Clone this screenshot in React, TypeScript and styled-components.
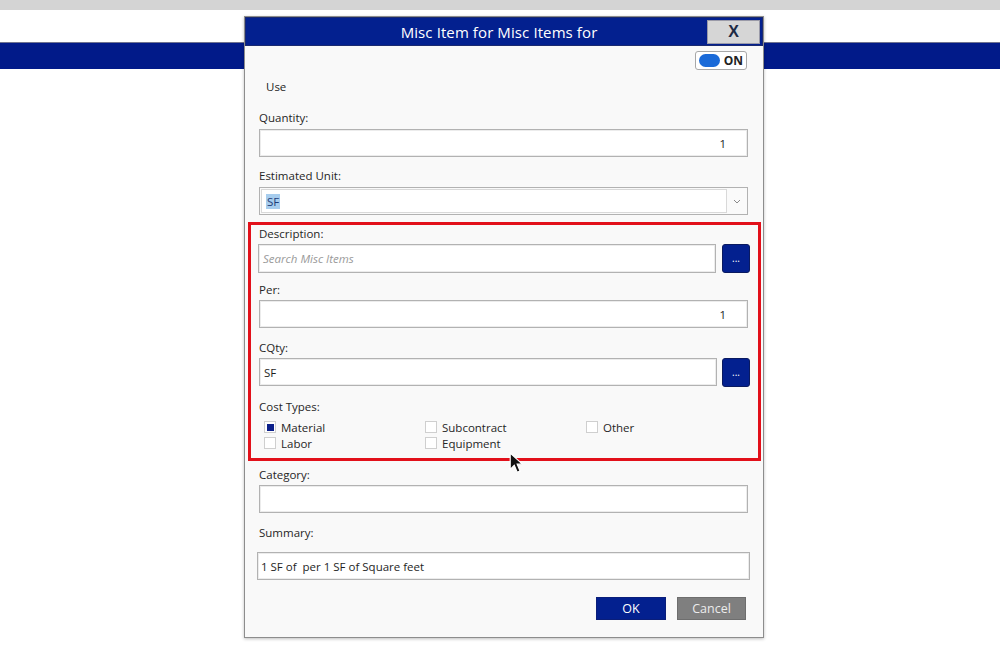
import React from "react";
import styled, { createGlobalStyle } from "styled-components";

const GlobalStyle = createGlobalStyle`
  html, body {
    margin: 0;
    padding: 0;
    background: #ffffff;
    font-family: "Open Sans", "Noto Sans", sans-serif;
    color: #1e1e1e;
  }
  * { box-sizing: border-box; }
`;

const Page = styled.div`
  position: relative;
  width: 1000px;
  height: 645px;
  overflow: hidden;
  background: #fff;
`;

const TopStrip = styled.div`
  height: 10px;
  background: #d4d4d4;
`;

const Band = styled.div`
  margin-top: 32px;
  height: 27px;
  background: #011a89;
  border-top: 1px solid #6f7390;
`;

const Dialog = styled.div`
  position: absolute;
  left: 244px;
  top: 16px;
  width: 520px;
  height: 622px;
  background: #f9f9f9;
  border: 1px solid #8d8d8d;
  box-shadow: 0 1px 3px rgba(0, 0, 0, 0.25);
  display: flex;
  flex-direction: column;
`;

const TitleBar = styled.div`
  height: 29px;
  background: #03208f;
  display: flex;
  align-items: center;
  justify-content: center;
  position: relative;
  border: 1px solid #1b2a70;
  padding-right: 10px;
`;

const Title = styled.div`
  color: #fff;
  font-size: 15px;
  letter-spacing: 0.1px;
`;

const CloseButton = styled.button`
  position: absolute;
  right: 2px;
  top: 2px;
  width: 53px;
  height: 24px;
  background: #d6d6d6;
  border: 1px solid #9a9aa8;
  font-family: "Liberation Sans", Arial, sans-serif;
  font-weight: bold;
  font-size: 16px;
  color: #1d2a44;
  display: flex;
  align-items: center;
  justify-content: center;
  padding: 0;
`;

const Body = styled.div`
  flex: 1;
  padding: 5px 15px 0 14px;
  display: flex;
  flex-direction: column;
  font-size: 11.5px;
`;

const ToggleRow = styled.div`
  display: flex;
  justify-content: flex-end;
  margin-right: 1px;
`;

const Toggle = styled.div`
  width: 52px;
  height: 19px;
  background: #fff;
  border: 1px solid #a8a8a8;
  border-radius: 3px;
  display: flex;
  align-items: center;
  padding: 0 3px;
  gap: 4px;
`;

const Knob = styled.div`
  width: 24px;
  height: 13px;
  border-radius: 7px;
  background: #1a6ad8;
`;

const ToggleText = styled.span`
  font-size: 12px;
  font-weight: 700;
  color: #222;
`;

const UseText = styled.div`
  font-size: 11.5px;
  line-height: 16px;
  margin: 9px 0 0 7px;
`;

const Field = styled.div<{ $top: number }>`
  margin-top: ${(p) => p.$top}px;
  display: flex;
  flex-direction: column;
`;

const Label = styled.div<{ $gap?: number }>`
  font-size: 11.5px;
  line-height: 16px;
  margin-bottom: ${(p) => (p.$gap ?? 3)}px;
  color: #262626;
`;

const Input = styled.div<{ $right?: boolean; $height?: number; $extend?: number }>`
  height: ${(p) => p.$height ?? 28}px;
  flex: 1 1 auto;
  min-width: 0;
  background: #fff;
  border: 1px solid #b2b2b2;
  box-shadow: inset 0 0 0 1px #ececec;
  display: flex;
  align-items: center;
  justify-content: ${(p) => (p.$right ? "flex-end" : "flex-start")};
  padding: 0 ${(p) => (p.$right ? 21 : 4)}px 0 ${(p) => (p.$extend ? 3 : 4)}px;
  font-size: 11.5px;
  margin: 0 ${(p) => -(p.$extend ?? 0)}px;
`;

const Placeholder = styled.span`
  font-style: italic;
  color: #9a9a9a;
`;

const SelectBox = styled.div`
  height: 28px;
  background: #fafafa;
  border: 1px solid #b2b2b2;
  display: flex;
  align-items: stretch;
  padding: 1px;
`;

const SelectInner = styled.div`
  flex: 1;
  background: #fff;
  border: 1px solid #d9d9d9;
  display: flex;
  align-items: center;
  padding-left: 4px;
  font-size: 11.5px;
`;

const Selected = styled.span`
  background: #a7cdee;
  color: #1f3c78;
  padding: 0 1px;
`;

const Chevron = styled.div`
  width: 19px;
  display: flex;
  align-items: center;
  justify-content: center;
`;

const Highlight = styled.section`
  margin: 7px -13px 0 -11px;
  border: 3px solid #e2101a;
  padding: 1px 10px 7px 8px;
  display: flex;
  flex-direction: column;
`;

const ActionRow = styled.div<{ $gap: number; $shift?: number }>`
  display: flex;
  align-items: stretch;
  gap: ${(p) => p.$gap}px;
  margin-right: -2px;
  margin-left: ${(p) => p.$shift ?? 0}px;
`;

const DotsButton = styled.button`
  width: 28px;
  height: 29px;
  flex: none;
  background: #03208f;
  border: 1px solid #0a1a60;
  border-radius: 3px;
  color: #fff;
  font-size: 10px;
  line-height: 1;
  padding: 0 0 2px;
  display: flex;
  align-items: center;
  justify-content: center;
  font-family: "Open Sans", sans-serif;
`;

const CheckGrid = styled.div`
  display: grid;
  grid-template-columns: 161px 161px 1fr;
  grid-auto-rows: 16px;
  margin-top: 4px;
  margin-left: 5px;
`;

const CheckItem = styled.label`
  display: flex;
  align-items: center;
  gap: 5px;
  font-size: 11.5px;
  color: #262626;
`;

const Box = styled.span<{ $on?: boolean }>`
  width: 12px;
  height: 12px;
  border: 1px solid #cfcfcf;
  background: #fff;
  display: flex;
  align-items: center;
  justify-content: center;
  &::after {
    content: "";
    width: 7px;
    height: 7px;
    background: ${(p) => (p.$on ? "#0b1f8a" : "transparent")};
  }
`;

const Footer = styled.div`
  display: flex;
  justify-content: flex-end;
  gap: 11px;
  margin-top: 17px;
  padding-right: 2px;
`;

const DialogButton = styled.button<{ $primary?: boolean }>`
  width: ${(p) => (p.$primary ? 70 : 69)}px;
  height: 23px;
  border: 1px solid ${(p) => (p.$primary ? "#0a1e7a" : "#6e6e6e")};
  background: ${(p) => (p.$primary ? "#03208f" : "#7f7f7f")};
  color: ${(p) => (p.$primary ? "#fff" : "#ececec")};
  font-family: "Open Sans", sans-serif;
  font-size: 12.5px;
  padding: 0;
`;

const Pointer = styled.svg`
  position: absolute;
  left: 509px;
  top: 452px;
`;

const costTypes = [
  { label: "Material", on: true },
  { label: "Subcontract" },
  { label: "Other" },
  { label: "Labor" },
  { label: "Equipment" },
];

export default function App() {
  return (
    <Page>
      <GlobalStyle />
      <TopStrip />
      <Band />
      <Dialog>
        <TitleBar>
          <Title>Misc Item for Misc Items for</Title>
          <CloseButton>X</CloseButton>
        </TitleBar>
        <Body>
          <ToggleRow>
            <Toggle>
              <Knob />
              <ToggleText>ON</ToggleText>
            </Toggle>
          </ToggleRow>
          <UseText>Use</UseText>

          <Field $top={15}>
            <Label>Quantity:</Label>
            <Input $right>1</Input>
          </Field>

          <Field $top={11}>
            <Label>Estimated Unit:</Label>
            <SelectBox>
              <SelectInner>
                <Selected>SF</Selected>
              </SelectInner>
              <Chevron>
                <svg width="8" height="5" viewBox="0 0 8 5">
                  <path d="M1 1 L4 4 L7 1" fill="none" stroke="#8a8a8a" strokeWidth="1" />
                </svg>
              </Chevron>
            </SelectBox>
          </Field>

          <Highlight>
            <Field $top={0}>
              <Label $gap={2}>Description:</Label>
              <ActionRow $gap={6} $shift={-1}>
                <Input $height={29}>
                  <Placeholder>Search Misc Items</Placeholder>
                </Input>
                <DotsButton>...</DotsButton>
              </ActionRow>
            </Field>

            <Field $top={9}>
              <Label $gap={2}>Per:</Label>
              <Input $right>1</Input>
            </Field>

            <Field $top={12}>
              <Label $gap={2}>CQty:</Label>
              <ActionRow $gap={5}>
                <Input>SF</Input>
                <DotsButton>...</DotsButton>
              </ActionRow>
            </Field>

            <Field $top={12}>
              <Label $gap={0}>Cost Types:</Label>
              <CheckGrid>
                {costTypes.map((c) => (
                  <CheckItem key={c.label}>
                    <Box $on={c.on} />
                    {c.label}
                  </CheckItem>
                ))}
              </CheckGrid>
            </Field>
          </Highlight>

          <Field $top={6}>
            <Label $gap={2}>Category:</Label>
            <Input />
          </Field>

          <Field $top={12}>
            <Label $gap={11}>Summary:</Label>
            <Input $extend={2}>1 SF of&nbsp; per 1 SF of Square feet</Input>
          </Field>

          <Footer>
            <DialogButton $primary>OK</DialogButton>
            <DialogButton>Cancel</DialogButton>
          </Footer>
        </Body>
      </Dialog>
      <Pointer width="14" height="22" viewBox="0 0 12 19">
        <path d="M1 1 L1 15 L4.5 11.5 L7 17.5 L9.5 16.5 L7 10.5 L11.5 10.5 Z" fill="#111" stroke="#fff" strokeWidth="1" />
      </Pointer>
    </Page>
  );
}
